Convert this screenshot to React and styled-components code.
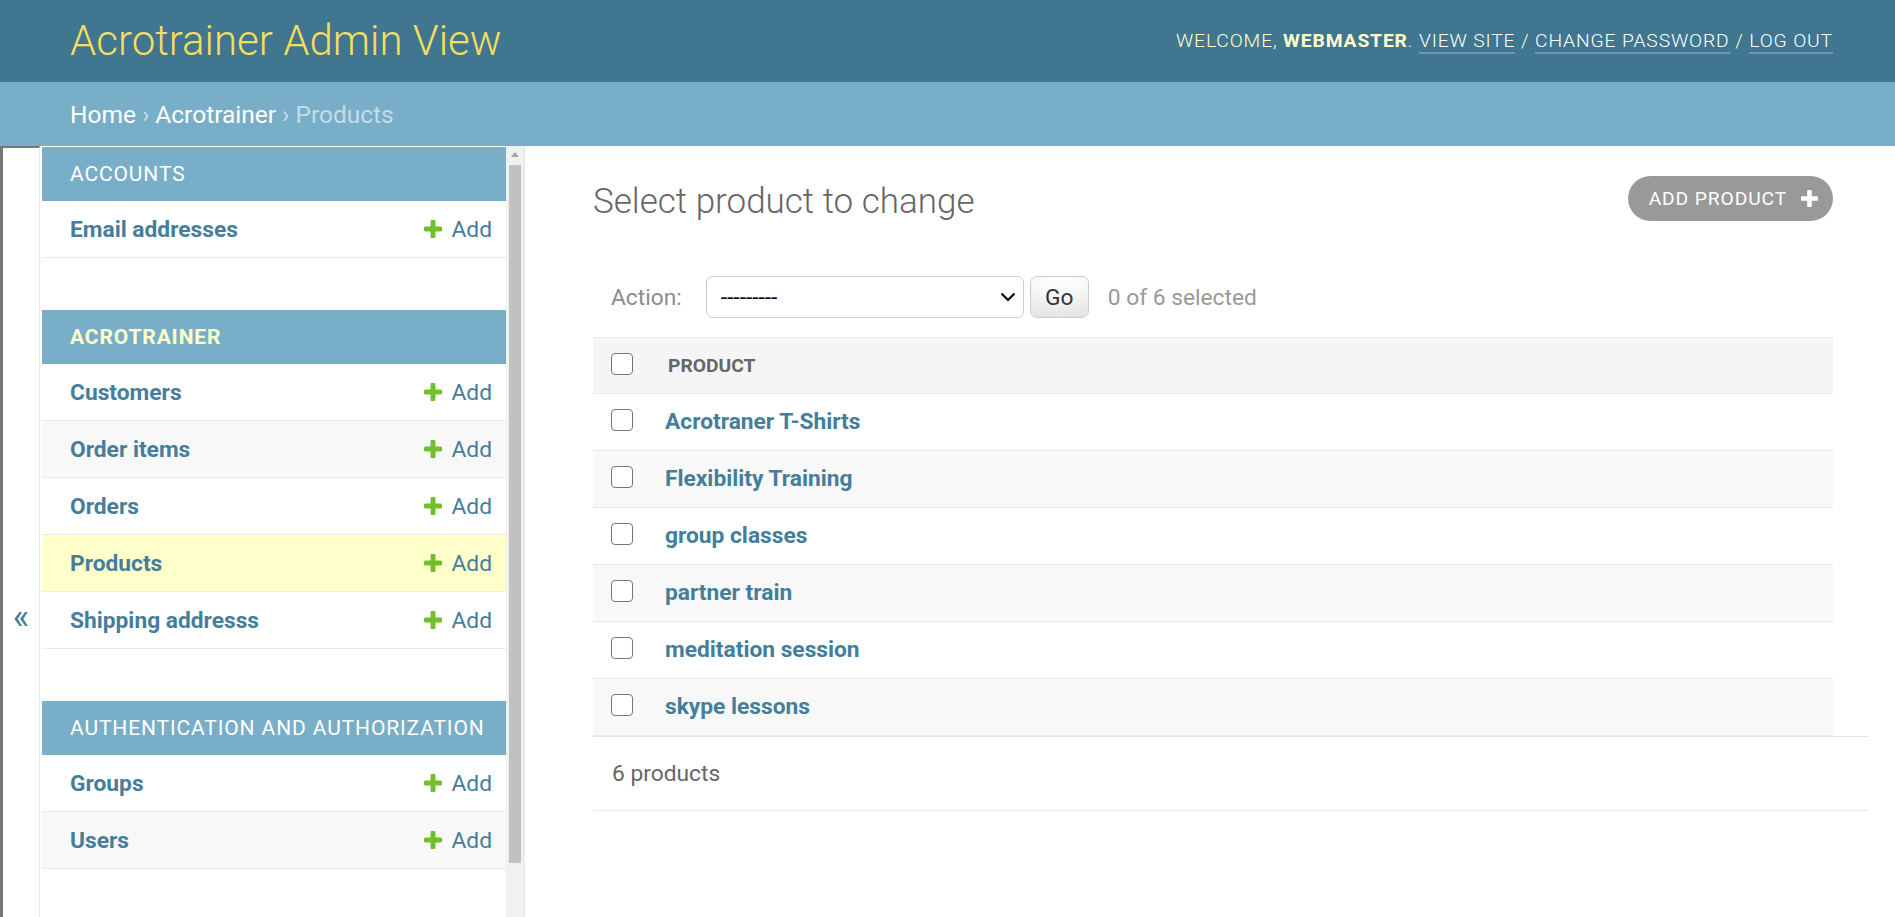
import React from "react";
import styled, { createGlobalStyle } from "styled-components";

const GlobalStyle = createGlobalStyle`
  html, body { margin: 0; padding: 0; overflow: hidden; background: #fff; }
  body { font-family: Roboto, "Liberation Sans", sans-serif; color: #333; }
  *, *::before, *::after { box-sizing: border-box; }
`;

const Page = styled.div`
  display: flex;
  flex-direction: column;
  width: 1895px;
`;

const Header = styled.header`
  display: flex;
  justify-content: space-between;
  align-items: center;
  height: 82px;
  padding: 0 62px 0 70px;
  background: #417690;
`;

const Branding = styled.h1`
  margin: 0;
  font-size: 42px;
  font-weight: 300;
  line-height: 1;
  color: #f5dd5d;
`;

const UserTools = styled.div`
  font-size: 19.25px;
  font-weight: 300;
  letter-spacing: 0.875px;
  text-transform: uppercase;
  color: #ffc;
  line-height: 1.4;
  strong { font-weight: 700; }
`;

const ToolLink = styled.a`
  color: #fff;
  text-decoration: none;
  border-bottom: 2px solid rgba(255, 255, 255, 0.25);
`;

const Breadcrumbs = styled.nav`
  display: flex;
  align-items: center;
  height: 64px;
  padding: 0 70px;
  background: #79aec8;
  color: #c4dce8;
  font-size: 24.5px;
`;

const Crumb = styled.a`
  color: #fff;
  text-decoration: none;
`;

const Sep = styled.span`
  margin: 0 6px;
`;

const MainRow = styled.div`
  display: flex;
  height: 946px;
`;

const ToggleButton = styled.button`
  flex: 0 0 40px;
  display: flex;
  align-items: center;
  justify-content: center;
  padding: 0 0 6px;
  margin: 0;
  background: #fff;
  border: 0;
  border-top: 2px solid #767676;
  border-left: 3px solid #767676;
  border-right: 1px solid #e8e8e8;
  color: #447e9b;
  font-family: Roboto, "Liberation Sans", sans-serif;
  font-size: 35px;
  cursor: pointer;
`;

const Sidebar = styled.aside`
  flex: 0 0 485px;
  width: 485px;
  min-width: 0;
  display: flex;
  border-right: 2px solid #eaeaea;
  height: 771px;
`;

const NavContent = styled.div`
  flex: 1;
  min-width: 0;
  padding: 1px 0 0 2px;
`;

const Module = styled.div`
  margin-bottom: 52px;
`;

const Caption = styled.div`
  display: flex;
  align-items: center;
  height: 54px;
  padding: 0 28px;
  background: #79aec8;
  color: ${(p) => (p.$current ? "#ffc" : "#fff")};
  font-weight: ${(p) => (p.$current ? 700 : 400)};
  font-size: 21px;
  letter-spacing: 0.875px;
  text-transform: uppercase;
  white-space: nowrap;
  overflow: hidden;
`;

const NavRow = styled.div`
  display: flex;
  justify-content: space-between;
  align-items: center;
  height: 57px;
  padding: 0 14px 0 28px;
  border-bottom: 1px solid #eaeaea;
  background: ${(p) => p.$bg || "#fff"};
`;

const ModelLink = styled.a`
  color: #447e9b;
  font-weight: 700;
  font-size: 22.75px;
  text-decoration: none;
`;

const AddLink = styled.a`
  display: flex;
  align-items: center;
  gap: 9px;
  color: #447e9b;
  font-size: 22.75px;
  text-decoration: none;
`;

const ScrollTrack = styled.div`
  flex: 0 0 17px;
  display: flex;
  flex-direction: column;
  align-items: stretch;
  background: #f1f1f1;
`;

const ScrollArrow = styled.div`
  height: 17px;
  display: flex;
  align-items: center;
  justify-content: center;
`;

const ScrollThumb = styled.div`
  height: 698px;
  margin: 2px 2px 0 3px;
  background: #c1c1c1;
`;

const Content = styled.main`
  flex: 1;
  min-width: 0;
  padding: 35px 27px 0 68px;
`;

const TitleRow = styled.div`
  display: flex;
  justify-content: space-between;
  align-items: flex-start;
  margin: 0 35px 38px 0;
`;

const Title = styled.h1`
  margin: 0;
  font-size: 35px;
  font-weight: 300;
  line-height: 41px;
  color: #666;
`;

const ObjectTool = styled.a`
  display: flex;
  align-items: center;
  gap: 14px;
  height: 45px;
  margin-top: -5px;
  padding: 0 15px 0 21px;
  border-radius: 23px;
  background: #999;
  color: #fff;
  font-size: 19.25px;
  letter-spacing: 0.875px;
  text-transform: uppercase;
  text-decoration: none;
`;

const Actions = styled.div`
  display: flex;
  align-items: center;
  padding: 16px 18px 19px;
  color: #8c8c8c;
  font-size: 22.75px;
`;

const ActionLabel = styled.label`
  margin-right: 24px;
`;

const SelectWrap = styled.div`
  position: relative;
  width: 318px;
  height: 42px;
  margin-right: 6px;
`;

const Select = styled.select`
  appearance: none;
  width: 100%;
  height: 100%;
  padding: 0 14px;
  border: 1.5px solid #ccc;
  border-radius: 7px;
  background: #fff;
  color: #000;
  font-family: Roboto, "Liberation Sans", sans-serif;
  font-size: 22.75px;
`;

const Chevron = styled.svg`
  position: absolute;
  right: 8px;
  top: 16px;
  pointer-events: none;
`;

const GoButton = styled.button`
  width: 59px;
  height: 42px;
  margin: 0 19px 0 0;
  padding: 0;
  border: 1.5px solid #ccc;
  border-radius: 7px;
  background: #fff;
  box-shadow: 0 -26px 35px -17px rgba(0, 0, 0, 0.15) inset;
  color: #333;
  font-family: Roboto, "Liberation Sans", sans-serif;
  font-size: 22.75px;
`;

const Counter = styled.span`
  color: #999;
`;

const Table = styled.table`
  width: calc(100% - 35px);
  border-collapse: collapse;
`;

const HeadCell = styled.th`
  height: 56px;
  background: #f5f5f5;
  border-top: 1px solid #eaeaea;
  border-bottom: 1px solid #eaeaea;
  text-align: left;
  vertical-align: top;
  padding: ${(p) => (p.$check ? "15px 0 0 18px" : "0 0 0 17px")};
  width: ${(p) => (p.$check ? "58px" : "auto")};
  color: #666;
  font-size: 19.25px;
  font-weight: 700;
  text-transform: uppercase;
  line-height: 55px;
`;

const Row = styled.tr`
  background: ${(p) => (p.$alt ? "#f8f8f8" : "#fff")};
`;

const CheckCell = styled.td`
  height: 57px;
  padding: 15px 0 0 18px;
  vertical-align: top;
  border-bottom: 1px solid #eaeaea;
`;

const NameCell = styled.th`
  padding: 0 0 1px 14px;
  text-align: left;
  vertical-align: middle;
  border-bottom: 1px solid #eaeaea;
  font-size: 22.75px;
  font-weight: 700;
`;

const RowLink = styled.a`
  color: #447e9b;
  text-decoration: none;
`;

const Checkbox = styled.input.attrs({ type: "checkbox" })`
  appearance: none;
  display: block;
  width: 22px;
  height: 22px;
  margin: 0;
  border: 1.5px solid #767676;
  border-radius: 4px;
  background: #fff;
`;

const Paginator = styled.p`
  display: flex;
  align-items: center;
  height: 75px;
  margin: 0;
  padding-left: 19px;
  border-top: 1px solid #e4e4e4;
  border-bottom: 1px solid #eaeaea;
  color: #666;
  font-size: 22.75px;
`;

const PlusIcon = ({ size, color }) => (
  <svg width={size} height={size} viewBox="192 128 1408 1408" aria-hidden="true">
    <path
      fill={color}
      d="M1600 736v192q0 40-28 68t-68 28h-416v416q0 40-28 68t-68 28h-192q-40 0-68-28t-28-68v-416h-416q-40 0-68-28t-28-68v-192q0-40 28-68t68-28h416v-416q0-40 28-68t68-28h192q40 0 68 28t28 68v416h416q40 0 68 28t28 68z"
    />
  </svg>
);

const modules = [
  { name: "Accounts", models: ["Email addresses"] },
  {
    name: "Acrotrainer",
    current: true,
    models: ["Customers", "Order items", "Orders", "Products", "Shipping addresss"],
  },
  { name: "Authentication and Authorization", models: ["Groups", "Users"] },
];

const products = [
  "Acrotraner T-Shirts",
  "Flexibility Training",
  "group classes",
  "partner train",
  "meditation session",
  "skype lessons",
];

export default function App() {
  return (
    <Page>
      <GlobalStyle />
      <Header>
        <Branding>Acrotrainer Admin View</Branding>
        <UserTools>
          Welcome, <strong>webmaster</strong>. <ToolLink href="#">View site</ToolLink> /{" "}
          <ToolLink href="#">Change password</ToolLink> / <ToolLink href="#">Log out</ToolLink>
        </UserTools>
      </Header>
      <Breadcrumbs>
        <Crumb href="#">Home</Crumb>
        <Sep>›</Sep>
        <Crumb href="#">Acrotrainer</Crumb>
        <Sep>›</Sep>
        <span>Products</span>
      </Breadcrumbs>
      <MainRow>
        <ToggleButton>«</ToggleButton>
        <Sidebar>
          <NavContent>
            {modules.map((m) => (
              <Module key={m.name}>
                <Caption $current={m.current}>{m.name}</Caption>
                {m.models.map((model, i) => (
                  <NavRow
                    key={model}
                    $bg={model === "Products" ? "#ffc" : i % 2 === 1 ? "#f8f8f8" : "#fff"}
                  >
                    <ModelLink href="#">{model}</ModelLink>
                    <AddLink href="#">
                      <PlusIcon size={18} color="#70bf2b" />
                      Add
                    </AddLink>
                  </NavRow>
                ))}
              </Module>
            ))}
          </NavContent>
          <ScrollTrack>
            <ScrollArrow>
              <svg width="8" height="5" viewBox="0 0 8 5">
                <path d="M0 5 L4 0 L8 5 Z" fill="#a3a3a3" />
              </svg>
            </ScrollArrow>
            <ScrollThumb />
          </ScrollTrack>
        </Sidebar>
        <Content>
          <TitleRow>
            <Title>Select product to change</Title>
            <ObjectTool href="#">
              Add product
              <PlusIcon size={17} color="#fff" />
            </ObjectTool>
          </TitleRow>
          <Actions>
            <ActionLabel>Action:</ActionLabel>
            <SelectWrap>
              <Select defaultValue="">
                <option value="">---------</option>
              </Select>
              <Chevron width="16" height="10" viewBox="0 0 16 10">
                <path d="M1.5 1.5 L8 8 L14.5 1.5" fill="none" stroke="#000" strokeWidth="2" />
              </Chevron>
            </SelectWrap>
            <GoButton>Go</GoButton>
            <Counter>0 of 6 selected</Counter>
          </Actions>
          <Table>
            <thead>
              <tr>
                <HeadCell $check>
                  <Checkbox />
                </HeadCell>
                <HeadCell>Product</HeadCell>
              </tr>
            </thead>
            <tbody>
              {products.map((p, i) => (
                <Row key={p} $alt={i % 2 === 1}>
                  <CheckCell>
                    <Checkbox />
                  </CheckCell>
                  <NameCell>
                    <RowLink href="#">{p}</RowLink>
                  </NameCell>
                </Row>
              ))}
            </tbody>
          </Table>
          <Paginator>6 products</Paginator>
        </Content>
      </MainRow>
    </Page>
  );
}
